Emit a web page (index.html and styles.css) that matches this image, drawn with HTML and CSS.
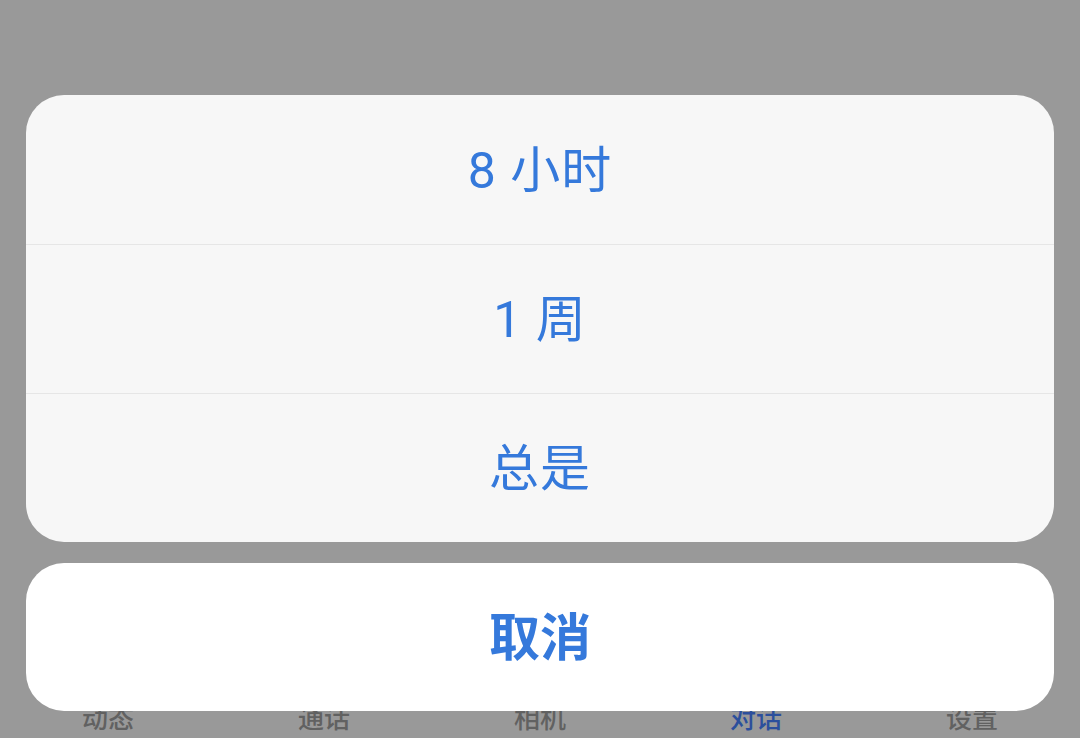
FILE: index.html
```html
<!DOCTYPE html>
<html lang="zh-CN">
<head>
<meta charset="utf-8">
<title>Action sheet</title>
<link rel="stylesheet" href="styles.css">
</head>
<body>
<div class="screen">
  <nav class="tabbar">
    <span class="tab">动态</span>
    <span class="tab">通话</span>
    <span class="tab">相机</span>
    <span class="tab tab-active">对话</span>
    <span class="tab">设置</span>
  </nav>
  <div class="sheet">
    <div class="group">
      <div class="option">8 小时</div>
      <div class="option">1 周</div>
      <div class="option">总是</div>
    </div>
    <div class="cancel">取消</div>
  </div>
</div>
</body>
</html>
```

FILE: styles.css
```css
* { box-sizing: border-box; }
html, body {
  margin: 0;
  padding: 0;
  background: #999999;
}
body {
  font-family: "Roboto", "Noto Sans CJK SC", "Noto Sans", sans-serif;
}
.screen {
  position: relative;
  width: 1080px;
  height: 738px;
  overflow: hidden;
  background: #999999;
  display: flex;
  flex-direction: column;
  justify-content: flex-end;
}
.tabbar {
  display: grid;
  grid-template-columns: repeat(5, 1fr);
  padding-bottom: 4px;
}
.tab {
  text-align: center;
  font-size: 26px;
  line-height: 30px;
  font-weight: 500;
  color: #616161;
}
.tab-active {
  color: #2c4f9c;
}
.sheet {
  position: absolute;
  left: 26px;
  right: 26px;
  top: 95px;
  display: flex;
  flex-direction: column;
  gap: 21px;
}
.group {
  background: #f7f7f7;
  border-radius: 38px;
  overflow: hidden;
  display: flex;
  flex-direction: column;
}
.option {
  height: 149px;
  padding-bottom: 8px;
  display: flex;
  align-items: center;
  justify-content: center;
  font-size: 50px;
  color: #3579db;
  letter-spacing: 1px;
}
.option + .option {
  border-top: 1px solid #e6e6e6;
}
.cancel {
  height: 148px;
  padding-bottom: 6px;
  background: #ffffff;
  border-radius: 38px;
  display: flex;
  align-items: center;
  justify-content: center;
  font-size: 51px;
  font-weight: 700;
  color: #3579db;
}
```
